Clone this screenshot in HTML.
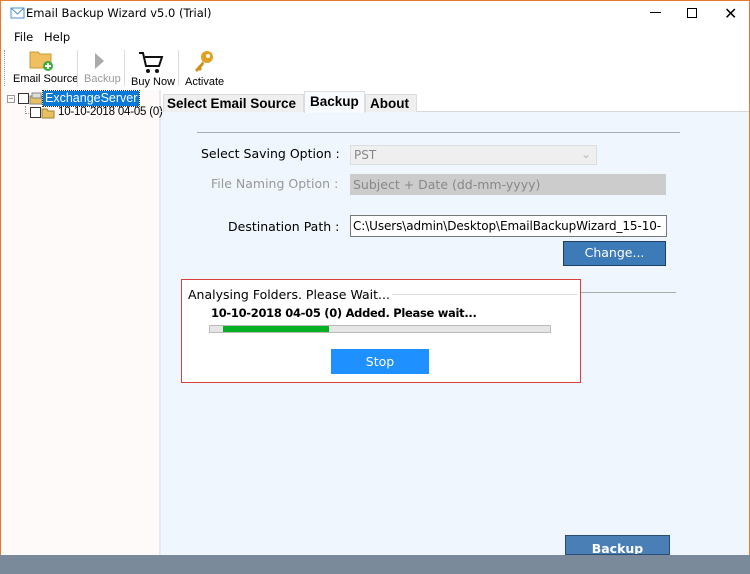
<!DOCTYPE html><html><head><style>
*{margin:0;padding:0;box-sizing:border-box}
body{width:750px;height:574px;position:relative;overflow:hidden;background:#fff;font-family:"Liberation Sans","DejaVu Sans",sans-serif;font-size:12px;color:#000}
.a{position:absolute;white-space:nowrap}
.t{font-family:"DejaVu Sans",sans-serif}
.l{font-family:"Liberation Sans",sans-serif}
</style></head><body>
<div class="a" style="left:0;top:0;width:750px;height:574px;border:1px solid #e8792a;border-bottom:none"></div>
<svg class="a" style="left:10px;top:6px" width="16" height="14"><rect x="1" y="2" width="13" height="10" fill="#fff" stroke="#4a90d9"/><path d="M1 2l6.5 6 6.5-6" fill="none" stroke="#4a90d9"/></svg>
<div class="a t" style="left:26px;top:6px;font-size:11.5px">Email Backup Wizard v5.0 (Trial)</div>
<div class="a" style="left:650px;top:12px;width:11px;height:1px;background:#000"></div>
<div class="a" style="left:687px;top:8px;width:10px;height:10px;border:1px solid #000"></div>
<div class="a" style="left:724px;top:4px;font-size:16px;font-weight:300">✕</div>
<div class="a t" style="left:14px;top:30px;font-size:11.5px">File</div>
<div class="a t" style="left:44px;top:30px;font-size:11.5px">Help</div>
<div class="a" style="left:4px;top:50px;height:36px;border-left:1px dotted #999"></div>
<svg class="a" style="left:29px;top:48px" width="26" height="24"><path d="M1 4h8l2 2h11v14H1z" fill="#f0c060" stroke="#c89a3a"/><circle cx="19" cy="18" r="5" fill="#3aae3a"/><path d="M19 15v6M16 18h6" stroke="#fff" stroke-width="2"/></svg>
<div class="a l" style="left:13px;top:73px;font-size:11px">Email Source</div>
<div class="a" style="left:77px;top:50px;width:1px;height:36px;background:#ddd"></div>
<svg class="a" style="left:93px;top:52px" width="12" height="18"><path d="M2 1l9 8-9 8z" fill="#aaa"/></svg>
<div class="a l" style="left:84px;top:73px;font-size:11px;color:#999">Backup</div>
<div class="a" style="left:124px;top:50px;width:1px;height:36px;background:#ddd"></div>
<svg class="a" style="left:138px;top:51px" width="26" height="24"><path d="M1 2h4l3 13h13l3-9H7" fill="none" stroke="#111" stroke-width="2"/><circle cx="10" cy="20" r="2" fill="#111"/><circle cx="19" cy="20" r="2" fill="#111"/></svg>
<div class="a l" style="left:131px;top:76px;font-size:11px">Buy Now</div>
<div class="a" style="left:178px;top:50px;width:1px;height:36px;background:#ddd"></div>
<svg class="a" style="left:193px;top:50px" width="22" height="24"><circle cx="14" cy="7" r="6" fill="#e0a020"/><circle cx="15" cy="6" r="2" fill="#fff"/><path d="M10 11L2 20l2 2 2-2 1 1 2-2-1-1 3-4" fill="#d09018"/></svg>
<div class="a l" style="left:185px;top:76px;font-size:11px">Activate</div>
<div class="a" style="left:1px;top:90px;width:160px;height:465px;background:#fffafa;border-right:2px solid #e4eaf0"></div>
<div class="a" style="left:7px;top:95px;width:8px;height:8px;border:1px solid #999;font-size:8px;line-height:6px;text-align:center;color:#555">−</div>
<div class="a" style="left:18px;top:93px;width:11px;height:11px;border:1px solid #333;background:#fff"></div>
<svg class="a" style="left:29px;top:92px" width="14" height="13"><rect x="1" y="4" width="12" height="8" fill="#e8c060" stroke="#888"/><rect x="3" y="1" width="9" height="5" fill="#ddd" stroke="#888"/></svg>
<div class="a l" style="left:43px;top:91px;height:15px;background:#0a78d7;color:#fff;font-size:12.5px;padding:0 2px;outline:1px dotted #333">ExchangeServer</div>
<div class="a" style="left:25px;top:106px;width:6px;height:8px;border-left:1px dotted #999;border-bottom:1px dotted #999"></div>
<div class="a" style="left:30px;top:107px;width:11px;height:11px;border:1px solid #333;background:#fff"></div>
<svg class="a" style="left:41px;top:107px" width="14" height="12"><path d="M1 2h5l1 2h6v7H1z" fill="#e8c060" stroke="#a08030"/></svg>
<div class="a" style="left:161px;top:112px;width:588px;height:443px;background:#f0f6fd"></div>
<div class="a l" style="left:58px;top:106px;font-size:11.5px;letter-spacing:-0.2px">10-10-2018 04-05 (0)</div>
<div class="a" style="left:161px;top:94px;width:588px;height:18px;border-bottom:1px solid #d8d8d8"></div>
<div class="a l" style="left:163px;top:94px;width:141px;height:18px;background:#efefef;border:1px solid #ddd;border-bottom:none;font-weight:bold;font-size:13.5px;padding:1px 3px">Select Email Source</div>
<div class="a l" style="left:304px;top:91px;width:61px;height:22px;background:#f8fbff;border:1px solid #ddd;border-bottom:none;font-weight:bold;font-size:13.5px;padding:2px 5px">Backup</div>
<div class="a l" style="left:365px;top:94px;width:52px;height:18px;background:#efefef;border:1px solid #ddd;border-bottom:none;font-weight:bold;font-size:13.5px;padding:1px 4px">About</div>
<div class="a" style="left:197px;top:132px;width:483px;height:1px;background:#aab"></div>
<div class="a t" style="left:201px;top:146px;font-size:12.5px">Select Saving Option :</div>
<div class="a t" style="left:350px;top:145px;width:247px;height:20px;background:#efefef;border:1px solid #ddd;color:#888;padding:2px 3px;font-size:12px">PST<span style="position:absolute;right:5px;top:1px;color:#bbb">⌄</span></div>
<div class="a t" style="left:211px;top:176px;font-size:12.5px;color:#999">File Naming Option :</div>
<div class="a t" style="left:350px;top:174px;width:316px;height:21px;background:#cccccc;color:#888;padding:3px 3px;font-size:12.5px">Subject + Date (dd-mm-yyyy)</div>
<div class="a t" style="left:228px;top:219px;font-size:12.5px">Destination Path :</div>
<div class="a t" style="left:350px;top:215px;width:317px;height:22px;background:#fff;border:1px solid #777;padding:3px 2px;font-size:12px;letter-spacing:-0.1px;overflow:hidden">C:\Users\admin\Desktop\EmailBackupWizard_15-10-</div>
<div class="a t" style="left:563px;top:241px;width:103px;height:25px;background:#3d7ab8;border:1px solid #1e3f66;color:#fff;font-size:12.5px;text-align:center;line-height:22px">Change...</div>
<div class="a" style="left:580px;top:292px;width:96px;height:1px;background:#aaa"></div>
<div class="a" style="left:181px;top:279px;width:400px;height:104px;background:#fff;border:1px solid #d84040"></div>
<div class="a" style="left:185px;top:294px;width:392px;height:1px;background:#ddd"></div>
<div class="a t" style="left:186px;top:287px;font-size:12.5px;background:#fff;padding:0 2px">Analysing Folders. Please Wait...</div>
<div class="a t" style="left:211px;top:306px;font-size:11.5px;font-weight:bold;letter-spacing:-0.3px">10-10-2018 04-05 (0) Added. Please wait...</div>
<div class="a" style="left:209px;top:325px;width:342px;height:8px;background:#e6e6e6;border:1px solid #bbb"></div>
<div class="a" style="left:223px;top:326px;width:106px;height:6px;background:#06b025"></div>
<div class="a t" style="left:331px;top:349px;width:98px;height:25px;background:#1e90ff;color:#fff;font-size:12.5px;text-align:center;line-height:25px">Stop</div>
<div class="a" style="left:565px;top:535px;width:105px;height:20px;background:#4a7fb5;border:1px solid #2a4d78;overflow:hidden"><div class="t" style="color:#fff;font-size:12.5px;font-weight:bold;text-align:center;margin-top:5px">Backup</div></div>
<div class="a" style="left:0;top:555px;width:750px;height:19px;background:#7a8a9a"></div>
</body></html>
